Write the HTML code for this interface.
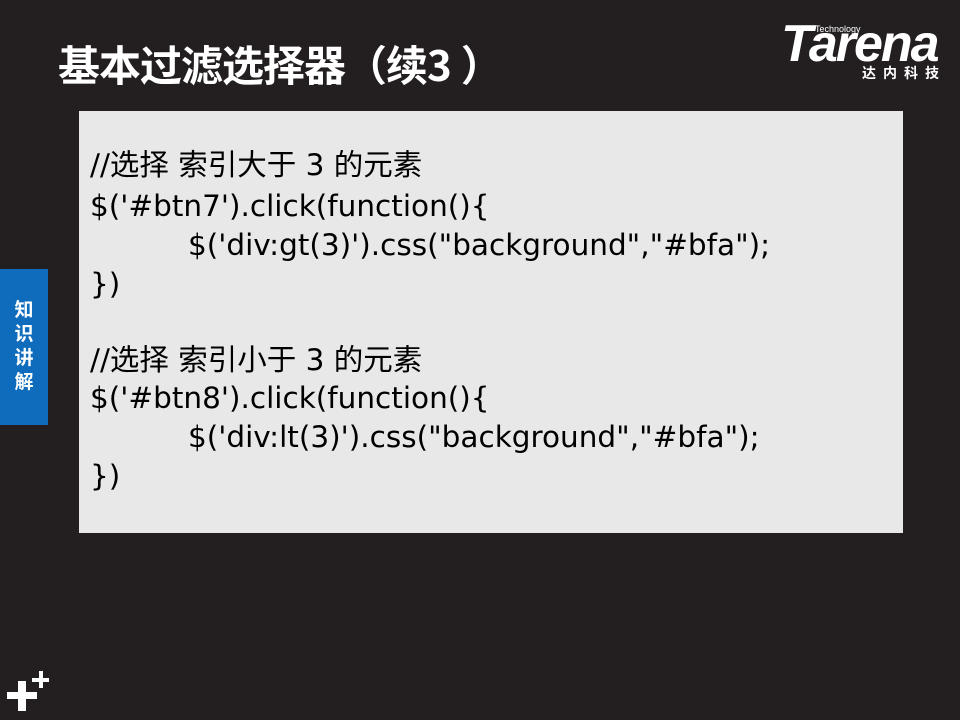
<!DOCTYPE html>
<html><head><meta charset="utf-8"><style>
body{margin:0;width:960px;height:720px;background:#231f20;position:relative;overflow:hidden;font-family:"Liberation Sans","Noto Sans CJK SC",sans-serif}
.t{position:absolute;left:58px;top:39px;color:#fff;font-size:42px;font-weight:bold;font-family:"Noto Sans CJK SC",sans-serif;line-height:50px;white-space:pre;letter-spacing:-1px}
.box{position:absolute;left:79px;top:111px;width:824px;height:422px;background:#e8e8e8}
.l{position:absolute;left:90px;font-size:29.5px;color:#000;white-space:pre;line-height:34px;font-family:"DejaVu Sans","Noto Sans CJK SC",sans-serif}
.tab{position:absolute;left:0;top:269px;width:48px;height:156px;background:#0f6cbd;color:#fff;font-weight:bold;font-size:19px;font-family:"Noto Sans CJK SC",sans-serif;text-align:center;line-height:24px;padding-top:28px;box-sizing:border-box}
.p{position:absolute;background:#fff}
</style></head><body>
<div class="t">基本过滤选择器（续3<span style="margin-left:10px">）</span></div>
<div style="position:absolute;left:781px;top:16px;color:#fff;font-family:'Liberation Sans',sans-serif;font-style:italic;font-weight:bold;font-size:52px;letter-spacing:-2px;line-height:56px">Tarena</div>
<div style="position:absolute;left:815px;top:24px;color:#fff;font-size:9px">Technology</div>
<div style="position:absolute;left:862px;top:63px;color:#fff;font-size:14px;font-weight:bold;letter-spacing:7px;font-family:'Noto Sans CJK SC',sans-serif">达内科技</div>
<div class="box"></div>
<div class="l" style="top:148px">//选择 索引大于 3 的元素</div>
<div class="l" style="top:189px">$('#btn7').click(function(){</div>
<div class="l" style="top:228px;left:188px">$('div:gt(3)').css("background","#bfa");</div>
<div class="l" style="top:267px">})</div>
<div class="l" style="top:343px">//选择 索引小于 3 的元素</div>
<div class="l" style="top:381px">$('#btn8').click(function(){</div>
<div class="l" style="top:420px;left:188px">$('div:lt(3)').css("background","#bfa");</div>
<div class="l" style="top:459px">})</div>
<div class="tab">知<br>识<br>讲<br>解</div>
<div class="p" style="left:7px;top:692px;width:30px;height:7px"></div>
<div class="p" style="left:18px;top:681px;width:8px;height:30px"></div>
<div class="p" style="left:32px;top:678px;width:17px;height:4px"></div>
<div class="p" style="left:39px;top:671px;width:4px;height:17px"></div>
</body></html>
